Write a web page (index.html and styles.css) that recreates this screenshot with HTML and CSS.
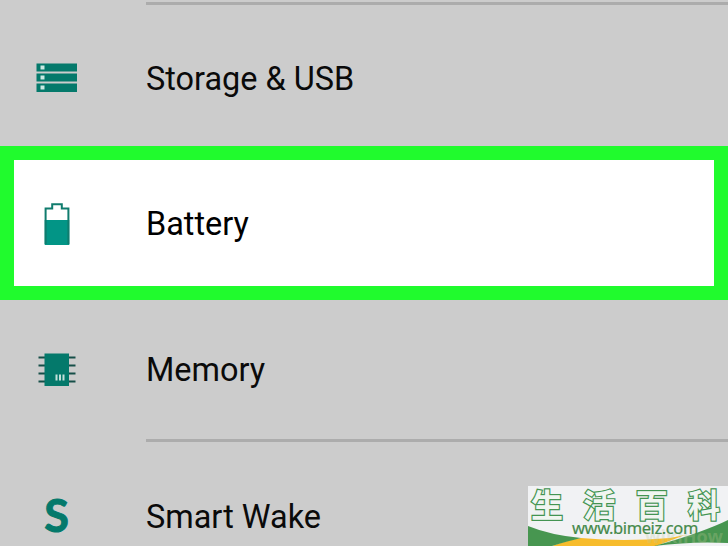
FILE: index.html
```html
<!DOCTYPE html>
<html lang="en">
<head>
    <meta charset="UTF-8">
    <meta name="viewport" content="width=device-width, initial-scale=1.0">
    <title>Settings</title>
    <link rel="stylesheet" href="styles.css">
</head>
<body>
    <div class="settings">
        <div class="row row-storage">
            <div class="icon">
                <svg width="42" height="30" viewBox="0 0 42 30">
                    <path fill="#04796b" d="M.5 .5h40.500v8H.5zM.5 10.500h40.500v8H.5zM.5 20.500h40.500v8.500H.5z"/>
                    <path fill="#c9e8e2" d="M4.500 2.500h4v4h-4zM4.500 12.500h4v4h-4zM4.500 22.500h4v4h-4z"/>
                </svg>
            </div>
            <div class="label">Storage &amp; USB</div>
        </div>

        <div class="row row-battery">
            <div class="icon">
                <svg width="26" height="42" viewBox="0 0 26 42">
                    <path fill="#029586" d="M.7 17h24.600v25H.7z"/>
                    <path fill="none" stroke="#107c6e" stroke-width="2" d="M1.600 41V5.500h6.600V1.200h9.600v4.300h6.600V41"/>
                </svg>
            </div>
            <div class="label">Battery</div>
        </div>

        <div class="row row-memory">
            <div class="icon">
                <svg width="38" height="34" viewBox="0 0 38 34">
                    <path stroke="#164f48" stroke-width="2.200" d="M.5 4.500h37M.5 12.500h37M.5 20.500h37M.5 28.500h37"/>
                    <path fill="#04796b" d="M6.500 .5h24.500v32.500H6.500z"/>
                    <path fill="#c4dfda" d="M17.500 21.500h2v6h-2zM21 21.500h2v6h-2zM24.500 21.500h2v6h-2z"/>
                </svg>
            </div>
            <div class="label">Memory</div>
        </div>

        <div class="row row-wake">
            <div class="icon icon-letter">S</div>
            <div class="label">Smart Wake</div>
        </div>
    </div>

    <!-- Site badge over the bottom right corner -->
    <div class="badge">
        <svg class="badge-waves" width="200" height="60" viewBox="0 0 200 60">
            <path fill="#f7bc2c" d="M24 60Q40 54 53 52Q95 56 142 52L157 49L128 60z"/>
            <path fill="#479650" d="M0 40Q22 49 53 52Q40 55 24 60H0z"/>
            <path fill="#479650" d="M126 60Q152 53 171 46T200 34V57Q165 55 126 60z"/>
        </svg>
        <div class="badge-ghost">wikiHow</div>
        <div class="badge-title" lang="zh-CN">
            <span>生</span><span>活</span><span>百</span><span>科</span>
        </div>
        <div class="badge-url">www.bimeiz.com</div>
    </div>
</body>
</html>
```
FILE: styles.css
```css
* {
    box-sizing: border-box;
}

body {
    margin: 0;
    height: 546px;
    overflow: hidden;
    background: #ccc;
    font-family: Roboto, sans-serif;
    color: #0a0a0a;
}

.settings {
    height: 546px;
    padding-top: 2px;
}

.row {
    display: flex;
    align-items: center;
    position: relative;
}

.icon {
    width: 113px;
    display: flex;
    justify-content: center;
}

.icon svg {
    display: block;
}

.label {
    margin-left: 33px;
    padding-top: 2px;
    font-size: 32.450px;
    line-height: 40px;
    white-space: nowrap;
}

/* Dividers start at the label column */
.row-storage::before,
.row-wake::before {
    content: "";
    position: absolute;
    top: 0;
    left: 146px;
    right: 0;
    height: 3px;
    background: #acacac;
}

.row-storage {
    height: 144px;
    padding-top: 7px;
}

.row-battery {
    height: 154px;
    border: 14px solid #20fb2d;
    background: #fff;
    color: #000;
}

.row-battery .icon {
    width: 85px;
    padding-top: 2px;
}

.row-battery .label {
    margin-left: 47px;
}

.row-memory {
    height: 139px;
    padding-bottom: 1px;
}

.row-memory .icon {
    padding-top: 1px;
}

.row-wake {
    height: 107px;
    padding-top: 46px;
}

.icon-letter {
    padding-bottom: 2px;
    font-family: Lato, sans-serif;
    font-size: 45px;
    font-weight: 700;
    line-height: 50px;
    -webkit-text-stroke: 1px #04796b;
    color: #04796b;
}

.badge {
    position: absolute;
    right: 0;
    bottom: 0;
    width: 200px;
    height: 60px;
    overflow: hidden;
    background: #f1f2f4;
}

.badge-waves {
    position: absolute;
    left: 0;
    top: 0;
}

.badge-ghost {
    position: absolute;
    right: 5px;
    bottom: 1px;
    font: bold 18px/18px "Open Sans", sans-serif;
    color: rgba(190, 200, 150, 0.3);
}

.badge-title {
    position: relative;
    display: flex;
    justify-content: space-between;
    padding: 0 8px 0 3px;
    font: 700 32px/34px "Noto Sans CJK SC", sans-serif;
    color: #f1f5f1;
    -webkit-text-stroke: 2.400px #439452;
    paint-order: stroke fill;
}

.badge-url {
    position: relative;
    width: max-content;
    margin-top: -2px;
    margin-left: 44px;
    font: 400 16.500px/20px "Noto Sans", sans-serif;
    letter-spacing: -0.400px;
    -webkit-text-stroke: 0.2px #45894a;
    color: #45894a;
}
```
